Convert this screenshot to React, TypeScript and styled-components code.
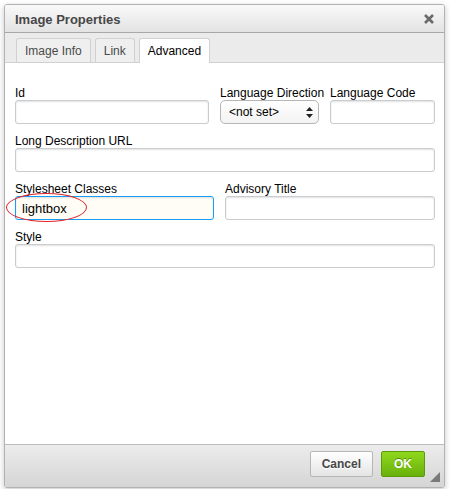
import React from 'react'
import styled, { createGlobalStyle } from 'styled-components'

const GlobalStyle = createGlobalStyle`
  html, body {
    margin: 0;
    padding: 0;
    background: #ffffff;
  }
  body {
    font-family: "Liberation Sans", Arial, sans-serif;
    color: #000;
  }
`

const Page = styled.div`
  width: 450px;
  height: 489px;
  padding: 4px 0 0 4px;
  box-sizing: border-box;
  overflow: hidden;
`

const Dialog = styled.div`
  width: 441px;
  box-sizing: border-box;
  border: 1px solid #b2b2b2;
  border-radius: 3px;
  background: #fff;
  box-shadow: 0 2px 6px rgba(0, 0, 0, 0.22);
  overflow: hidden;
`

const TitleBar = styled.div`
  height: 27px;
  border-bottom: 1px solid #a8a8a8;
  background: linear-gradient(to bottom, #f9f9f9, #e3e3e3);
  display: flex;
  align-items: center;
  justify-content: space-between;
  padding: 0 10px 0 10px;
`

const Title = styled.div`
  font-size: 13px;
  font-weight: bold;
  color: #474747;
  padding-top: 1px;
`

const Close = styled.div`
  width: 10px;
  height: 10px;
  display: flex;
`

const TabStrip = styled.div`
  height: 29px;
  border-bottom: 1px solid #d1d1d1;
  background: #ebebeb;
  display: flex;
  align-items: flex-end;
  gap: 4px;
  padding: 0 0 0 11px;
`

const Tab = styled.div<{ $active?: boolean }>`
  box-sizing: border-box;
  padding: 0 8px;
  border: 1px solid #d1d1d1;
  border-bottom: none;
  border-radius: 3px 3px 0 0;
  background: ${p => (p.$active ? '#fff' : '#efefef')};
  color: ${p => (p.$active ? '#000' : '#4a4a4a')};
  font-size: 12px;
  display: flex;
  align-items: center;
  margin-bottom: ${p => (p.$active ? '-1px' : '0')};
  height: ${p => (p.$active ? '25px' : '24px')};
`

const Body = styled.div`
  height: 381px;
  box-sizing: border-box;
  padding: 21px 9px 0 10px;
  display: flex;
  flex-direction: column;
  gap: 8px;
`

const Row = styled.div<{ $cols: string }>`
  display: grid;
  grid-template-columns: ${p => p.$cols};
  column-gap: 11px;
`

const Field = styled.div`
  display: flex;
  flex-direction: column;
  position: relative;
`

const Label = styled.label`
  height: 16px;
  box-sizing: border-box;
  padding-top: 2px;
  font-size: 12px;
  line-height: 14px;
  color: #000;
  white-space: nowrap;
`

const Input = styled.input<{ $focused?: boolean }>`
  height: 24px;
  width: 100%;
  box-sizing: border-box;
  border: 1px solid ${p => (p.$focused ? '#139ff7' : '#c9cccf')};
  border-radius: 3px;
  background: ${p => (p.$focused ? '#fffdf6' : '#fff')};
  box-shadow: inset 0 1px 2px rgba(0, 0, 0, 0.12);
  font-family: "Liberation Sans", Arial, sans-serif;
  font-size: 13px;
  color: #000;
  padding: 0 6px;
  outline: none;
  margin: 0;
`

const Select = styled.div`
  height: 24px;
  box-sizing: border-box;
  border: 1px solid #b6b6b6;
  border-radius: 5px;
  background: linear-gradient(to bottom, #ffffff, #f3f3f3);
  display: flex;
  align-items: center;
  justify-content: space-between;
  padding: 0 5px 0 8px;
  font-size: 12px;
  color: #000;
`

const Highlight = styled.div`
  position: absolute;
  left: -9px;
  top: 13px;
  width: 79px;
  height: 27px;
  border: 1px solid #e0242a;
  border-radius: 50%;
  pointer-events: none;
`

const Footer = styled.div`
  height: 36px;
  border-top: 1px solid #bcbcbc;
  background: linear-gradient(to bottom, #ececec, #d5d5d5);
  display: flex;
  align-items: flex-start;
  justify-content: flex-end;
  gap: 8px;
  padding: 6px 19px 0 0;
  position: relative;
`

const Button = styled.div<{ $primary?: boolean }>`
  height: 26px;
  box-sizing: border-box;
  padding: 0 ${p => (p.$primary ? '12px' : '11px')};
  border: 1px solid ${p => (p.$primary ? '#5b9a0b' : '#b6b6b6')};
  border-radius: 2px;
  background: ${p =>
    p.$primary
      ? 'linear-gradient(to bottom, #8fd81c, #69b10b)'
      : 'linear-gradient(to bottom, #ffffff, #e4e4e4)'};
  color: ${p => (p.$primary ? '#fff' : '#474747')};
  text-shadow: ${p => (p.$primary ? '0 -1px 0 #4c8a00' : '0 1px 0 #fff')};
  font-size: 12px;
  font-weight: bold;
  display: flex;
  align-items: center;
`

const Grip = styled.div`
  position: absolute;
  right: 4px;
  bottom: 5px;
  width: 0;
  height: 0;
  border-left: 10px solid transparent;
  border-bottom: 10px solid #7a7a7a;
`

const Arrows = () => (
  <svg width="7" height="11" viewBox="0 0 7 11">
    <path d="M3.5 0 L7 4 L0 4 Z" fill="#222" />
    <path d="M3.5 11 L7 7 L0 7 Z" fill="#222" />
  </svg>
)

export default function App() {
  return (
    <Page>
      <GlobalStyle />
      <Dialog>
        <TitleBar>
          <Title>Image Properties</Title>
          <Close>
            <svg width="10" height="10" viewBox="0 0 10 10">
              <path d="M1 1 L9 9 M9 1 L1 9" stroke="#6a6a6a" strokeWidth="2.6" />
            </svg>
          </Close>
        </TitleBar>
        <TabStrip>
          <Tab>Image Info</Tab>
          <Tab>Link</Tab>
          <Tab $active>Advanced</Tab>
        </TabStrip>
        <Body>
          <Row $cols="194px 99px 1fr">
            <Field>
              <Label>Id</Label>
              <Input readOnly defaultValue="" />
            </Field>
            <Field>
              <Label>Language Direction</Label>
              <Select>
                <span>&lt;not set&gt;</span>
                <Arrows />
              </Select>
            </Field>
            <Field>
              <Label>Language Code</Label>
              <Input readOnly defaultValue="" />
            </Field>
          </Row>
          <Row $cols="1fr">
            <Field>
              <Label>Long Description URL</Label>
              <Input readOnly defaultValue="" />
            </Field>
          </Row>
          <Row $cols="199px 1fr">
            <Field>
              <Label>Stylesheet Classes</Label>
              <Input readOnly $focused defaultValue="lightbox" />
              <Highlight />
            </Field>
            <Field>
              <Label>Advisory Title</Label>
              <Input readOnly defaultValue="" />
            </Field>
          </Row>
          <Row $cols="1fr">
            <Field>
              <Label>Style</Label>
              <Input readOnly defaultValue="" />
            </Field>
          </Row>
        </Body>
        <Footer>
          <Button>Cancel</Button>
          <Button $primary>OK</Button>
          <Grip />
        </Footer>
      </Dialog>
    </Page>
  )
}
